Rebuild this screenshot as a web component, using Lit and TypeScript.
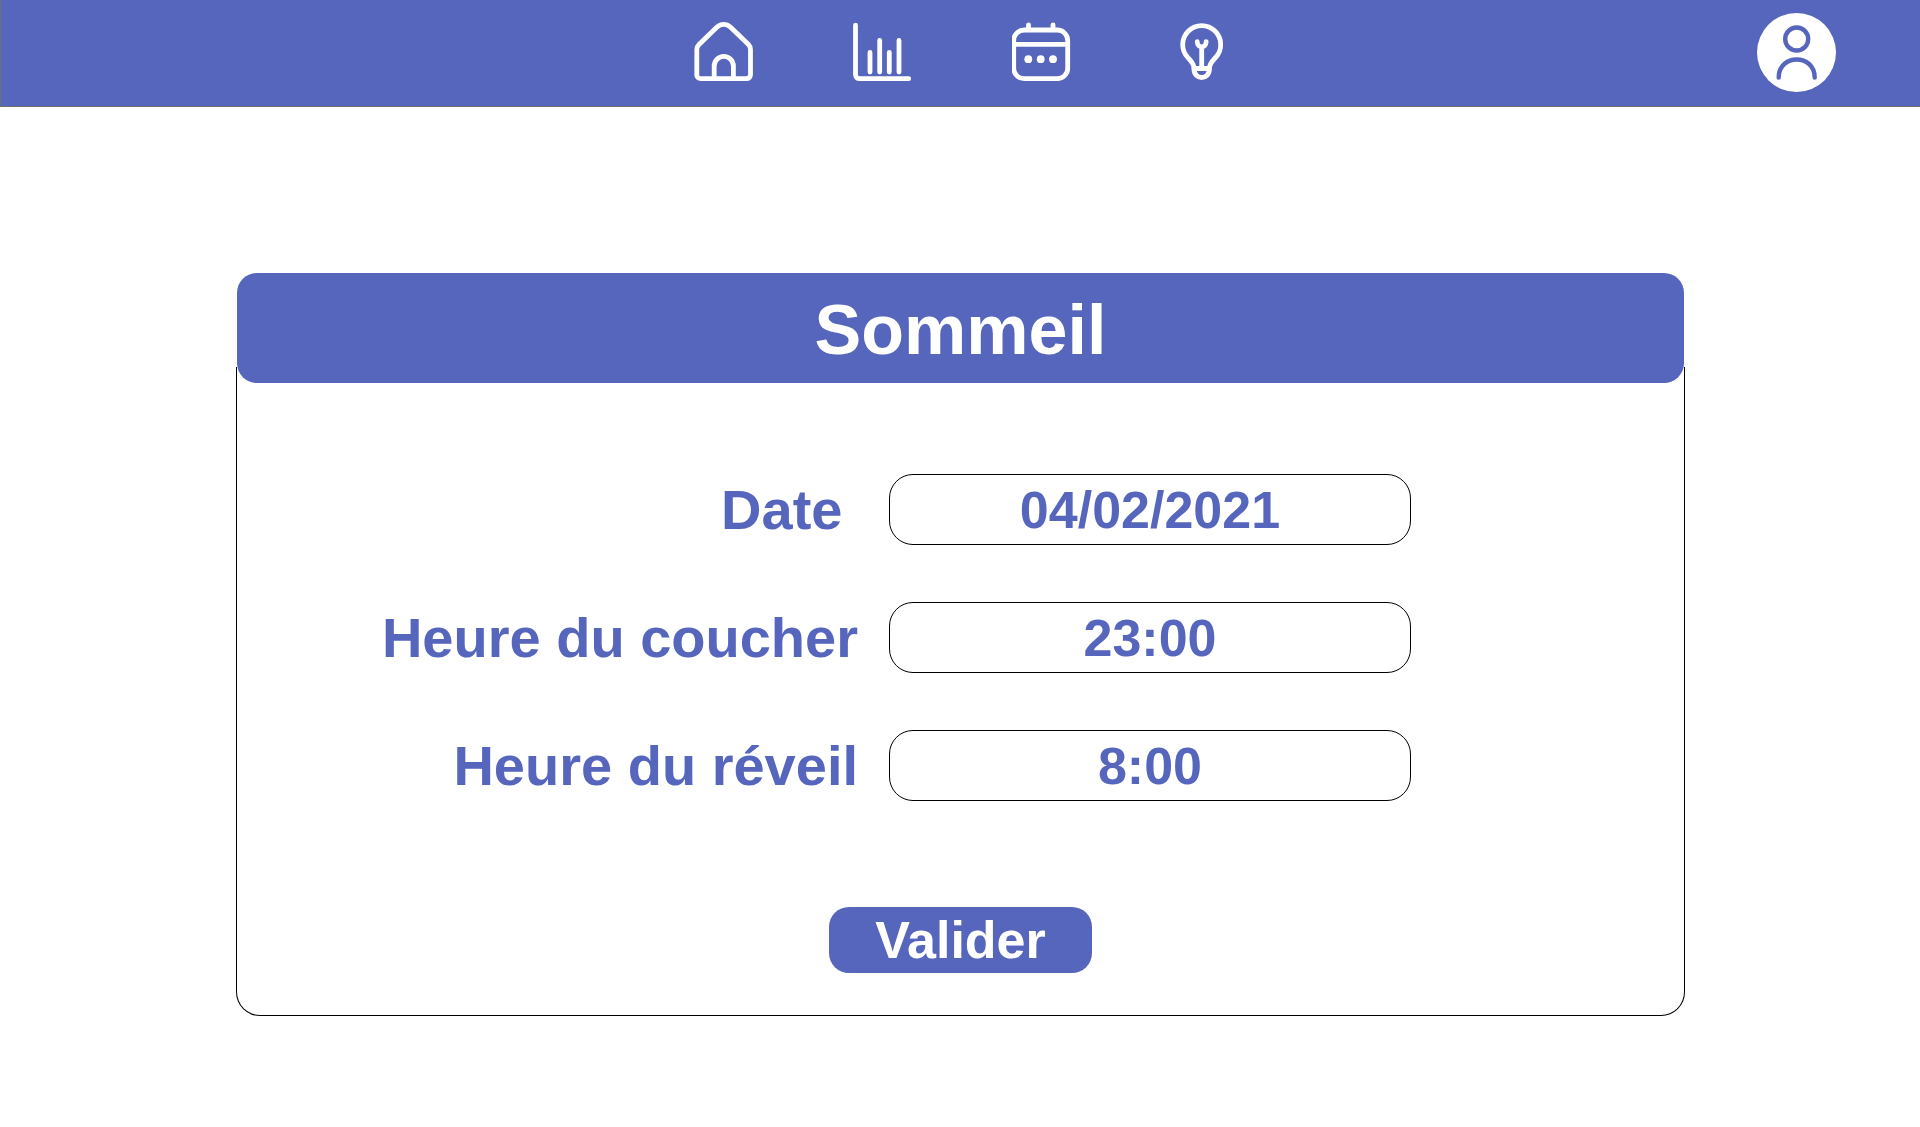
import { LitElement, html, css, svg } from "lit";
import { customElement, property } from "lit/decorators.js";

const icons = {
  home: svg`
    <path d="M2.800 54V27.500c0-2 .8-3.600 2.200-5L22.800 5.300c4.200-3.800 9.600-3.800 13.800 0L54.500 22.500c1.400 1.400 2 3 2 5V52.500c0 2.500-1.500 4.200-4.200 4.200H7c-2.700 0-4.200-1.500-4.200-4.200Z" />
    <path d="M20.200 56.500V44a9.600 9.600 0 0 1 19.200 0v12.500" />`,
  chart: svg`
    <path d="M2.500 3.200V52.500c0 2.500 1.500 4.200 4.200 4.200H55.700" />
    <path d="M17 30.500V50M26.700 18.500V50M36.300 30.500V50M46 18.500V50" />`,
  calendar: svg`
    <rect x="1.700" y="8" width="54" height="48.700" rx="10.500" />
    <path d="M1.700 22.300h54M16.500 2.800v5M41 2.800v5" />
    <g class="dots"><circle cx="16.300" cy="37.200" r="3.900" /><circle cx="28.700" cy="37.200" r="3.900" /><circle cx="41" cy="37.200" r="3.900" /></g>`,
  bulb: svg`
    <path d="M23 46.500c0-5-3-7.500-6.200-11A19 19 0 1 1 44.600 35.500c-3.200 3.500-6.200 6-6.200 11Z" />
    <path d="M23 46.500c-.5 12 15.900 12 15.400 0M30.700 46V25.500M26.200 19.700c.3 7 8.700 7 9 0" />`,
};

@customElement("nav-icon")
export class NavIcon extends LitElement {
  static styles = css`
    :host { display: block; }
    .link { display: block; }
    .glyph {
      display: block;
      width: 60px;
      height: 60px;
      fill: none;
      stroke: #fff;
      stroke-width: 4.8;
      stroke-linecap: round;
      stroke-linejoin: round;
    }
    .dots { fill: #fff; stroke: none; }
  `;

  @property() name: keyof typeof icons = "home";
  @property() label = "";

  render() {
    return html`<a class="link" href="#${this.name}" aria-label=${this.label}>
      <svg class="glyph" viewBox="0 0 60 60" aria-hidden="true">${icons[this.name]}</svg>
    </a>`;
  }
}

@customElement("top-bar")
export class TopBar extends LitElement {
  static styles = css`
    :host { display: block; }
    .bar {
      display: grid;
      grid-template-columns: 1fr auto 1fr;
      align-items: center;
      box-sizing: border-box;
      min-height: 107px;
      padding: 0 84px 2px 88px;
      background: #5666bc;
      border-bottom: 1px solid #707070;
      border-left: 1px solid #707070;
    }
    .links { grid-column: 2; display: flex; gap: 99px; }
    .account {
      justify-self: end;
      padding: 0;
      border: 0;
      border-radius: 50%;
      background: none;
      cursor: pointer;
    }
    .avatar { display: block; width: 79px; height: 79px; }
    .disc { fill: #fff; }
    .person { fill: none; stroke: #5666bc; stroke-width: 4.4; stroke-linecap: round; }
  `;

  render() {
    return html`<header class="bar">
      <nav class="links">
        <nav-icon name="home" label="Accueil"></nav-icon>
        <nav-icon name="chart" label="Statistiques"></nav-icon>
        <nav-icon name="calendar" label="Calendrier"></nav-icon>
        <nav-icon name="bulb" label="Conseils"></nav-icon>
      </nav>
      <button class="account" type="button" aria-label="Profil">
        <svg class="avatar" viewBox="0 0 79 79" aria-hidden="true">
          <circle class="disc" cx="39.5" cy="39.5" r="39.5" />
          <g class="person">
            <circle cx="39.7" cy="26" r="11.5" />
            <path d="M21.700 64.500c0-24 36-24 36 0" />
          </g>
        </svg>
      </button>
    </header>`;
  }
}

@customElement("sleep-form")
export class SleepForm extends LitElement {
  static styles = css`
    :host { display: block; }
    .title {
      position: relative;
      margin: 0 1px;
      padding-top: 4px;
      border-radius: 20px;
      background: #5666bc;
      color: #fff;
      font-size: 70px;
      font-weight: 700;
      line-height: 106px;
      text-align: center;
    }
    .panel {
      display: flex;
      flex-direction: column;
      gap: 106px;
      margin-top: -16px;
      padding: 107px 0 42px;
      border: 1px solid #000;
      border-top: 0;
      border-radius: 0 0 24px 24px;
    }
    .fields { display: flex; flex-direction: column; gap: 57px; }
    .row {
      display: grid;
      grid-template-columns: 623fr 522fr 244fr;
      column-gap: 29px;
      align-items: center;
    }
    .label {
      padding-right: 2px;
      color: #5666bc;
      font-size: 56px;
      font-weight: 700;
      line-height: 71px;
      text-align: right;
      white-space: pre;
    }
    .value {
      box-sizing: border-box;
      width: 100%;
      height: 71px;
      padding: 0 20px;
      border: 1px solid #000;
      border-radius: 24px;
      background: #fff;
      color: #5666bc;
      font: inherit;
      font-size: 52px;
      font-weight: 700;
      text-align: center;
    }
    .submit {
      align-self: center;
      padding: 0 46px;
      border: 0;
      border-radius: 20px;
      background: #5666bc;
      color: #fff;
      font: inherit;
      font-size: 52px;
      font-weight: 700;
      line-height: 66px;
      cursor: pointer;
    }
  `;

  private fields = [
    { id: "date", label: "Date ", value: "04/02/2021" },
    { id: "coucher", label: "Heure du coucher", value: "23:00" },
    { id: "reveil", label: "Heure du réveil", value: "8:00" },
  ];

  render() {
    return html`
      <h1 class="title">Sommeil</h1>
      <form class="panel" @submit=${(e: Event) => e.preventDefault()}>
        <div class="fields">
          ${this.fields.map(
            (f) => html`<div class="row">
              <label class="label" for=${f.id}>${f.label}</label>
              <input class="value" id=${f.id} type="text" .value=${f.value} />
            </div>`
          )}
        </div>
        <button class="submit" type="submit">Valider</button>
      </form>
    `;
  }
}

@customElement("app-root")
export class AppRoot extends LitElement {
  static styles = css`
    :host {
      display: block;
      min-height: 100vh;
      background: #fff;
      font-family: "Arial Rounded MT Bold", "Liberation Sans", Arial, sans-serif;
    }
    .content { padding: 166px 235px 110px 236px; }
  `;

  render() {
    return html`
      <top-bar></top-bar>
      <main class="content"><sleep-form></sleep-form></main>
    `;
  }
}
